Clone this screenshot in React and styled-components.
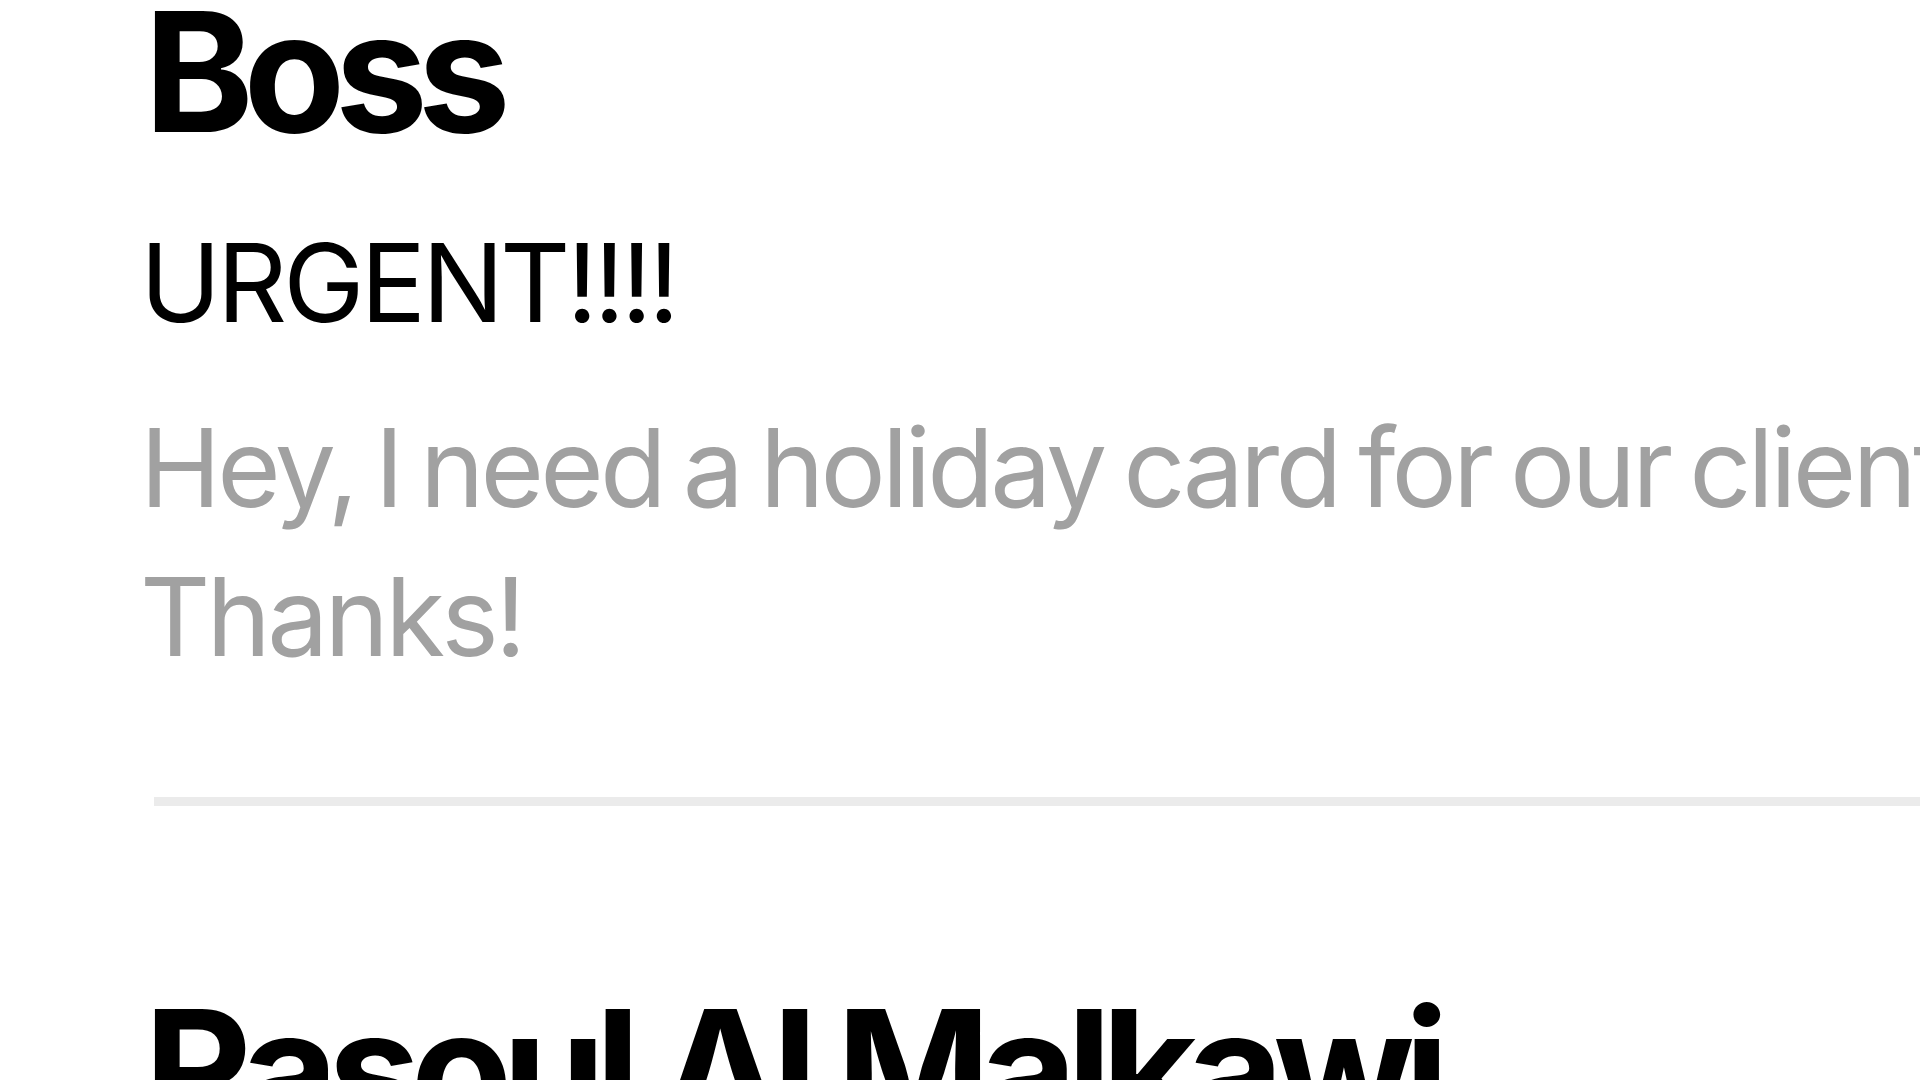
import styled, { createGlobalStyle } from "styled-components";

const GlobalStyle = createGlobalStyle`
  html, body {
    margin: 0;
    padding: 0;
    background: #ffffff;
    overflow: hidden;
  }
  body {
    font-family: Inter, "Noto Sans", "Liberation Sans", sans-serif;
    color: #000000;
  }
`;

const emails = [
  {
    from: "Boss",
    subject: "URGENT!!!!",
    body: ["Hey, I need a holiday card for our clients by the end of the week.", "Thanks!"],
  },
  {
    from: "Rasoul Al Malkawi",
    subject: "Lunch tomorrow?",
    body: ["Are you free for lunch tomorrow at noon?"],
  },
];

export default function App() {
  return (
    <>
      <GlobalStyle />
      <PageDiv>
        <ListDiv>
          {emails.map((mail, i) => (
            <EmailItem key={mail.from}>
              {i > 0 && <Divider />}
              <ItemBody>
                <FromText>{mail.from}</FromText>
                <SubjectText>{mail.subject}</SubjectText>
                <PreviewDiv>
                  {mail.body.map((line) => (
                    <PreviewLine key={line}>{line}</PreviewLine>
                  ))}
                </PreviewDiv>
              </ItemBody>
            </EmailItem>
          ))}
        </ListDiv>
      </PageDiv>
    </>
  );
}

const PageDiv = styled.main`
  width: 100vw;
  height: 100vh;
  overflow: hidden;
`;

// list is scrolled a little, first item's top padding is off screen
const ListDiv = styled.section`
  display: flex;
  flex-direction: column;
  margin-top: -192px;
  padding-left: 140px;
`;

const EmailItem = styled.article`
  display: flex;
  flex-direction: column;
`;

const Divider = styled.hr`
  margin: 0 0 0 14px;
  border: none;
  height: 9px;
  width: 3000px;
  background-color: #ebebeb;
`;

const ItemBody = styled.div`
  display: flex;
  flex-direction: column;
  padding: 198px 0 106px 0;
`;

const FromText = styled.h2`
  margin: 0 0 0 4px;
  font-size: 166px;
  line-height: 0.8;
  font-weight: 700;
  letter-spacing: -0.062em;
  white-space: nowrap;
`;

const SubjectText = styled.h3`
  margin: 78px 0 0 0;
  font-size: 109px;
  line-height: 1.2;
  font-weight: 400;
  letter-spacing: -0.037em;
  white-space: nowrap;
`;

const PreviewDiv = styled.div`
  margin-top: 45px;
  display: flex;
  flex-direction: column;
`;

const PreviewLine = styled.p`
  margin: 0;
  font-size: 109px;
  line-height: 149px;
  font-weight: 400;
  color: #a1a1a1;
  letter-spacing: -0.035em;
  word-spacing: -0.065em;
  white-space: nowrap;
`;
